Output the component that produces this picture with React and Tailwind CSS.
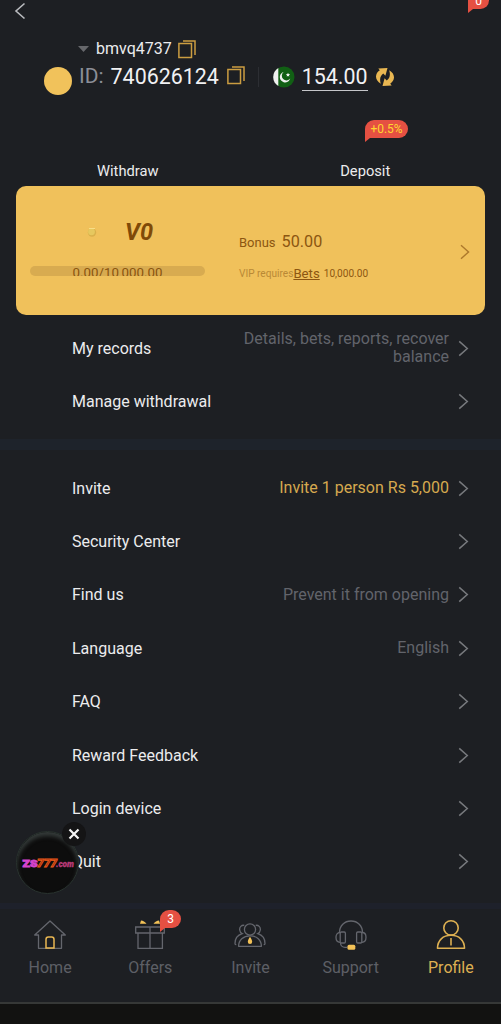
// src/App.jsx
const recordRows = [
  { label: 'My records', value: 'Details, bets, reports, recover balance' },
  { label: 'Manage withdrawal' },
];

const settingRows = [
  { label: 'Invite', value: 'Invite 1 person Rs 5,000', highlight: true },
  { label: 'Security Center' },
  { label: 'Find us', value: 'Prevent it from opening' },
  { label: 'Language', value: 'English' },
  { label: 'FAQ' },
  { label: 'Reward Feedback' },
  { label: 'Login device' },
  { label: 'Quit' },
];

const tabs = [
  { label: 'Home', icon: HomeIcon },
  { label: 'Offers', icon: GiftIcon, badge: 3 },
  { label: 'Invite', icon: InviteIcon },
  { label: 'Support', icon: SupportIcon },
  { label: 'Profile', icon: ProfileIcon, active: true },
];

function Chevron({ className }) {
  return (
    <svg viewBox="0 0 11 18" className={className} fill="none" stroke="currentColor" strokeWidth="1.6">
      <path d="M1 1.5 9.5 9 1 16.5" />
    </svg>
  );
}

function CopyIcon() {
  return (
    <svg viewBox="0 0 18 19" className="h-[19px] w-[18px] shrink-0" fill="none" stroke="#cb9d41" strokeWidth="1.5">
      <path d="M.9 3.6h12.6v14H.9z" />
      <path d="M5 1h12v14" />
    </svg>
  );
}

function PakistanFlag() {
  return (
    <svg viewBox="0 0 22 22" className="h-[22px] w-[22px] shrink-0">
      <circle cx="11" cy="11" r="10.5" fill="#115f14" />
      <path d="M5.3 2v18A10.5 10.5 0 0 1 5.3 2" fill="#f0f0f0" />
      <path d="M10.6 6a5.3 5.3 0 1 0 6.6 6.6A4.7 4.7 0 1 1 10.6 6" fill="#f0f0f0" />
      <path d="m15 6.8.6 1.3 1.5.1-1.1 1 .3 1.4-1.3-.7-1.3.7.3-1.4-1.1-1 1.5-.1z" fill="#f0f0f0" />
    </svg>
  );
}

function RefreshIcon() {
  return (
    <svg viewBox="0 0 18 20" className="h-5 w-[18px] shrink-0" fill="#e9b752">
      <path d="M4.8 16.8C1.6 15-.1 12.200 0 9.400.1 7 1.300 5 3.800 3.300L2.300 1.400 11.500 1 9.400 8.800 7.300 6.400C4.300 8.500 3.300 12 4.800 16.800" />
      <path
        transform="rotate(180 9 10)"
        d="M4.8 16.8C1.6 15-.1 12.200 0 9.400.1 7 1.300 5 3.800 3.300L2.300 1.400 11.500 1 9.400 8.800 7.300 6.400C4.300 8.500 3.300 12 4.800 16.800"
      />
    </svg>
  );
}

function HomeIcon() {
  return (
    <svg viewBox="0 0 34 32" className="h-8 w-[34px]" fill="none" stroke="#64666d" strokeWidth="1.3">
      <path d="M5.5 17H1.7L17 3l15.3 14h-3.800v13.3h-23z" strokeLinejoin="round" />
      <path d="M13 30V21.500c0-1.800 1-2.500 2.300-2.500h3.400c1.300 0 2.300.7 2.300 2.500V30z" stroke="#e9b752" strokeWidth="1.5" />
    </svg>
  );
}

function GiftIcon() {
  return (
    <svg viewBox="0 0 34 32" className="h-8 w-[34px]" fill="none" stroke="#64666d" strokeWidth="1.3">
      <path d="M2.700 9h28.600v6H2.700zM5 15v15.400h24.400V15M17 9v21.400" />
      <path d="M7 5.800 8 2.500c2 .3 4.200 1.300 5.500 3.300zM27 5.800 26 2.500c-2 .3-4.200 1.300-5.500 3.300z" fill="#f3c257" stroke="none" />
    </svg>
  );
}

function InviteIcon() {
  return (
    <svg viewBox="0 0 34 32" className="h-8 w-[34px]" fill="none" stroke="#64666d" strokeWidth="1.3">
      <circle cx="17" cy="11.5" r="5.6" />
      <path d="M5.600 28.300c0-6.400 4.600-10.500 11.400-10.500s11.400 4.100 11.400 10.500z" strokeLinejoin="round" />
      <path d="M11.300 7.300C8.500 6.800 6.300 9.200 6.700 12c.2 1.700 1.100 3 2.500 3.700C4.500 17.200 2 20.700 2 25.500c0 .7.7 1.200 1.300 1.200M22.700 7.300c2.800-.5 5 1.900 4.600 4.700-.2 1.700-1.100 3-2.500 3.700 4.700 1.500 7.200 5 7.200 9.800 0 .7-.7 1.200-1.300 1.200" />
      <path d="M17 18.800c.7 1.100 2.200 3.500 2.200 4.900a2.200 2.200 0 0 1-4.400 0c0-1.400 1.500-3.800 2.200-4.900" fill="#f3c257" stroke="none" />
    </svg>
  );
}

function SupportIcon() {
  return (
    <svg viewBox="0 0 34 32" className="h-8 w-[34px]" fill="none" stroke="#64666d" strokeWidth="1.3">
      <path d="M5.500 14.500C5.500 7.800 10.400 3 17 3s11.500 4.800 11.500 11.500" />
      <rect x="6.2" y="14" width="5.2" height="11" rx="1.2" />
      <rect x="22.6" y="14" width="5.2" height="11" rx="1.2" />
      <path d="M6 14.500c-2.500 0-4 2-4 4.800s1.500 5 4 5M28 14.500c2.500 0 4 2 4 4.800s-1.500 5-4 5M6.500 25c0 2.500 2 4.300 4.500 4.300h2.500" />
      <rect x="13.5" y="26.7" width="7.8" height="5" rx="1.5" fill="#f3c257" stroke="none" />
    </svg>
  );
}

function ProfileIcon() {
  return (
    <svg viewBox="0 0 34 32" className="h-8 w-[34px]" fill="none" stroke="#ddb052" strokeWidth="1.6">
      <circle cx="17" cy="9.9" r="7.2" />
      <path d="M3.500 30.300c0-8 5.500-13 13.500-13s13.500 5 13.500 13z" strokeLinejoin="round" />
      <path d="M17 20v7.500" />
    </svg>
  );
}

function Bubble({ className, children }) {
  return (
    <div className={`absolute ${className}`}>
      <svg viewBox="0 0 8 13" className="absolute -bottom-1 left-0 h-[13px] w-2 fill-[#e55042]">
        <path d="M0 0v13l5-4h3V0z" />
      </svg>
      <div className="relative flex h-full items-center justify-center rounded-r-full rounded-tl-full bg-[#e55042]">
        {children}
      </div>
    </div>
  );
}

function MenuRow({ label, value, highlight }) {
  return (
    <div className="flex h-[53.4px] items-center pr-8 pl-[72px]">
      <span className="shrink-0 pt-px text-[16px] text-[#ececee]">{label}</span>
      <span
        className={`ml-auto w-[215px] text-right text-[16px] leading-[18px] ${highlight ? 'text-[#d6a94f]' : 'text-[#62646b]'}`}
      >
        {value}
      </span>
      <Chevron className="ml-[9px] h-[17px] w-[11px] shrink-0 text-[#77797d]" />
    </div>
  );
}

function Header() {
  return (
    <header className="flex h-[186px] flex-col">
      <Chevron className="mt-[2px] ml-[14px] h-[18px] w-3 rotate-180 text-[#b9bbbf]" />
      <Bubble className="-top-2 left-[468px] h-[17px] w-[21px]">
        <span className="text-[12px] leading-4 text-white">0</span>
      </Bubble>

      <div className="mt-[19px] flex items-center pl-[78px]">
        <svg viewBox="0 0 11 6" className="mr-[7px] h-1.5 w-[11px] fill-[#66676b]">
          <path d="M0 0h11L5.500 6z" />
        </svg>
        <span className="mr-[6px] text-[16px] leading-5 text-[#ececee]">bmvq4737</span>
        <CopyIcon />
      </div>

      <div className="mt-[3px] flex h-[30px] items-center pl-[44px]">
        <span className="mt-[7px] h-7 w-7 rounded-full bg-[#f1c25b]" />
        <span className="ml-[7px] text-[21px] text-[#8b8e97]">ID:</span>
        <span className="mr-2 ml-[7px] text-[21.4px] text-[#f1f1f3]">740626124</span>
        <span className="pb-[3px]">
          <CopyIcon />
        </span>
        <span className="mr-[14px] ml-[13px] h-5 w-px bg-[#2c2e33]" />
        <PakistanFlag />
        <span className="ml-[7px] border-b border-[#c5c6c9] text-[21.400px] leading-[26px] text-[#f1f1f3]">154.00</span>
        <span className="ml-2">
          <RefreshIcon />
        </span>
      </div>

      <Bubble className="top-[120px] left-[365px] h-[18px] w-[43px]">
        <span className="pb-px text-[12px] text-[#ffd62f]">+0.5%</span>
      </Bubble>

      <div className="mt-auto mb-[3px] ml-[9px] grid w-[475px] grid-cols-2 text-center text-[14.7px] leading-6 text-[#ececee]">
        <span>Withdraw</span>
        <span>Deposit</span>
      </div>
    </header>
  );
}

function VipCard() {
  return (
    <section className="mx-4 flex h-[129px] items-center rounded-[10px] bg-[#f0c15b] pr-[15px] pl-[14px]">
      <div className="w-[175px] pb-[7px]">
        <div className="flex items-center pl-[56px]">
          <svg viewBox="0 0 12 14" className="h-[14px] w-3">
            <circle cx="6" cy="7.5" r="4.2" fill="#d9b04b" />
            <circle cx="5.5" cy="6.8" r="3.4" fill="#e6c85f" />
            <path d="M3 3.500h6" stroke="#f8dd86" />
          </svg>
          <span className="ml-[27px] text-[23.5px] leading-[28px] font-bold text-[#804a08] italic">V0</span>
        </div>
        <div className="mt-[20px] h-[10.5px] overflow-hidden rounded-full bg-[#d8ab50] text-center text-[13.3px] leading-[13px] text-[#89540f]">
          0.00/10,000.00
        </div>
      </div>
      <div className="ml-[34px] pt-[11px] text-[#8c5611]">
        <div className="flex items-center gap-[6px]">
          <span className="text-[13px]">Bonus</span>
          <span className="text-[16.2px]">50.00</span>
        </div>
        <div className="mt-[11px] flex items-center text-[10.1px] leading-4">
          <span className="text-[#b98936]">VIP requires</span>
          <span className="text-[13.2px] underline">Bets</span>
          <span className="ml-1">10,000.00</span>
        </div>
      </div>
      <Chevron className="mt-[3px] ml-auto h-4 w-[10px] text-[#ad792c]" />
    </section>
  );
}

function FloatingPromo() {
  return (
    <div className="absolute top-[831px] left-4 h-[63px] w-[63px]">
      <div className="flex h-full items-center justify-center rounded-full border border-[#29332f] bg-[#0d0d0d] shadow-[inset_0_4px_4px_#343a39]">
        <svg viewBox="0 0 54 14" className="h-[14px] w-[54px] font-['Roboto',sans-serif] font-black">
          <text x="1.500" y="10.500" fontSize="9" textLength="15" lengthAdjust="spacingAndGlyphs" fill="#d744ce" stroke="#d744ce" strokeWidth=".8">ZS</text>
          <text x="16" y="11" fontSize="11" textLength="20" lengthAdjust="spacingAndGlyphs" fill="#8e2d12" stroke="#ed5b1b" strokeWidth=".8" fontStyle="italic">777</text>
          <text x="35" y="10.500" fontSize="8.500" textLength="18" lengthAdjust="spacingAndGlyphs" fill="#ba3b78" stroke="#ba3b78" strokeWidth=".3" fontStyle="italic">.com</text>
        </svg>
      </div>
      <button className="absolute -top-[9px] left-[46px] flex h-6 w-6 items-center justify-center rounded-full bg-[#141415]">
        <svg viewBox="0 0 12 12" className="h-3 w-3" stroke="#f5f5f5" strokeWidth="2.2">
          <path d="m1.500 1.500 9 9m0-9-9 9" />
        </svg>
      </button>
    </div>
  );
}

function TabBar() {
  return (
    <nav className="grid h-[95px] grid-cols-5 border-b-2 border-[#363837] bg-[#1d1f23]">
      {tabs.map(({ label, icon: Icon, badge, active }) => (
        <div key={label} className="relative flex flex-col items-center pt-[9px]">
          <Icon />
          <span className={`mt-[6px] text-[16px] leading-6 ${active ? 'text-[#ddb052]' : 'text-[#5d5f66]'}`}>
            {label}
          </span>
          {badge && (
            <Bubble className="top-px left-[60px] h-[18px] w-[21px]">
              <span className="text-[12px] text-white">{badge}</span>
            </Bubble>
          )}
        </div>
      ))}
    </nav>
  );
}

export default function App() {
  return (
    <div className="relative flex h-[1024px] w-[501px] flex-col overflow-hidden bg-[#1d1f23] font-['Roboto',sans-serif]">
      <Header />
      <VipCard />
      <section className="h-[124px] pt-[6.5px]">
        {recordRows.map((row) => (
          <MenuRow key={row.label} {...row} />
        ))}
      </section>
      <div className="h-[11px] bg-[#1e232b]" />
      <section className="h-[453px] pt-[11.5px]">
        {settingRows.map((row) => (
          <MenuRow key={row.label} {...row} />
        ))}
      </section>
      <div className="h-[6px] bg-[#1e212b]" />
      <TabBar />
      <div className="flex-1 bg-[#121211]" />
      <FloatingPromo />
    </div>
  );
}
